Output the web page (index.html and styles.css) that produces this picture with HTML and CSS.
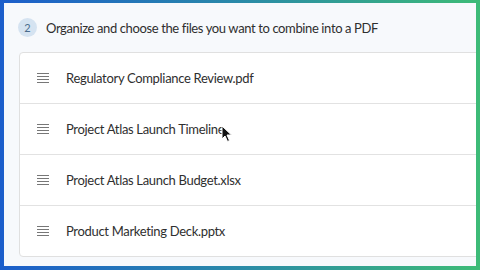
FILE: index.html
```html
<!DOCTYPE html>
<html lang="en">
<head>
    <meta charset="UTF-8">
    <meta name="viewport" content="width=device-width, initial-scale=1.0">
    <title>Merge PDF</title>
    <link rel="stylesheet" href="styles.css">
</head>
<body>
    <div class="panel">
        <div class="step">
            <span class="badge">2</span>
            <span class="step-title">Organize and choose the files you want to combine into a PDF</span>
        </div>

        <ul class="file-list">
            <li class="file-row">
                <span class="handle"><i></i><i></i><i></i><i></i></span>
                <span class="file-name">Regulatory Compliance Review.pdf</span>
            </li>
            <li class="file-row">
                <span class="handle"><i></i><i></i><i></i><i></i></span>
                <span class="file-name">Project Atlas Launch Timeline</span>
                <svg class="cursor" width="12" height="18" viewBox="0 0 12 18">
                    <path d="M1 1 L1 14 L4 11 L6.5 16.5 L8.5 15.5 L6 10 L10.5 10 Z" fill="#111" stroke="#fff" stroke-width="1"/>
                </svg>
            </li>
            <li class="file-row">
                <span class="handle"><i></i><i></i><i></i><i></i></span>
                <span class="file-name">Project Atlas Launch Budget.xlsx</span>
            </li>
            <li class="file-row">
                <span class="handle"><i></i><i></i><i></i><i></i></span>
                <span class="file-name">Product Marketing Deck.pptx</span>
            </li>
        </ul>
    </div>
</body>
</html>
```

FILE: styles.css
```css
body {
    margin: 0;
    width: 480px;
    height: 270px;
    overflow: hidden;
    background: linear-gradient(90deg, #1c5ecb 0%, #2a8aa8 50%, #3dbb77 100%);
    font-family: Lato, "Open Sans", Arial, sans-serif;
    color: #333;
}

.panel {
    margin: 3px 4px 0 4px;
    height: 263px;
    background: #f7f9fc;
    overflow: hidden;
}

.step {
    display: flex;
    align-items: center;
    gap: 9px;
    height: 49px;
    padding-left: 14px;
}

.badge {
    width: 19px;
    height: 19px;
    border-radius: 50%;
    background: #d5e3f1;
    color: #4a6c8c;
    font-size: 11px;
    display: flex;
    align-items: center;
    justify-content: center;
}

.step-title {
    font-size: 13px;
    letter-spacing: -0.38px;
    color: #2f2f2f;
}

.file-list {
    list-style: none;
    margin: 0 -12px 0 15px;
    padding: 0;
    background: #fff;
    border: 1px solid #e0e0e0;
    border-radius: 4px;
}

.file-row {
    position: relative;
    display: flex;
    align-items: center;
    gap: 17px;
    height: 50px;
    padding-left: 17px;
    border-bottom: 1px solid #e2e2e2;
}

.file-row:last-child {
    border-bottom: none;
}

.handle {
    display: flex;
    flex-direction: column;
    gap: 2px;
    width: 12px;
}

.handle i {
    display: block;
    height: 1px;
    background: #777;
}

.file-name {
    font-size: 13px;
    letter-spacing: -0.32px;
    color: #2f2f2f;
}

.cursor {
    position: absolute;
    left: 201px;
    top: 21px;
}
```
